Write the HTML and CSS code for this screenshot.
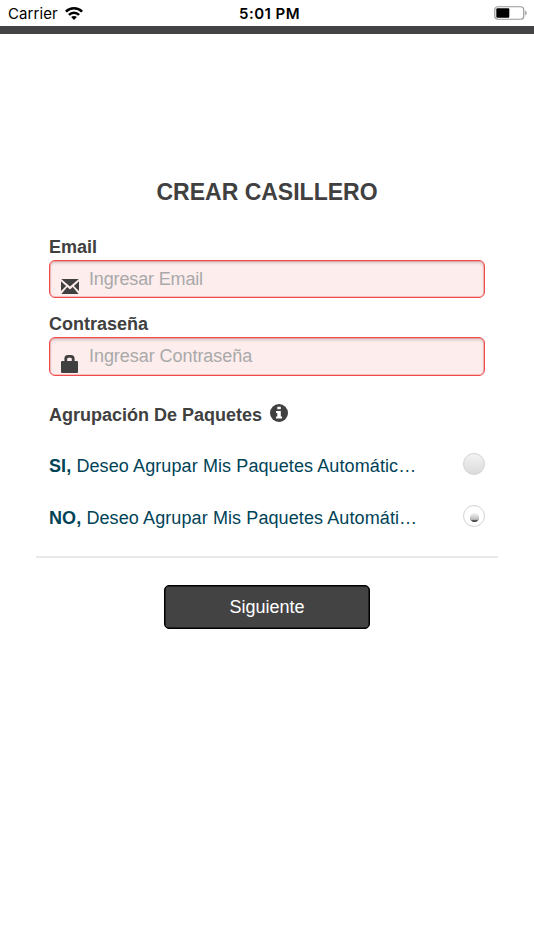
FILE: index.html
```html
<!DOCTYPE html>
<html lang="es">
<head>
<meta charset="utf-8">
<title>Crear Casillero</title>
<link rel="stylesheet" href="styles.css">
</head>
<body>
<header class="status">
  <div class="carrier"><span class="carrier-name">Carrier</span>
    <svg class="wifi" viewBox="0 0 18 13" width="18" height="13"><g fill="none" stroke="#000" stroke-width="2.5"><path d="M.9 4.7C5.4.2 12.6.2 17.1 4.7"/><path d="M3.9 7.9c2.9-2.9 7.3-2.9 10.2 0"/></g><path d="M9 13 6.1 10.1c1.6-1.6 4.2-1.6 5.8 0z"/></svg>
  </div>
  <time class="clock">5:01 PM</time>
  <svg class="battery" viewBox="0 0 34 14" width="34" height="14"><rect x=".75" y=".75" width="29" height="12.5" rx="3" fill="#fff" stroke="#999" stroke-width="1.2"/><rect x="2.3" y="2.3" width="13" height="9.4" rx="1"/><path d="M31.3 4.7c1.7.5 1.7 4.1 0 4.6z" fill="#888"/></svg>
</header>
<div class="topbar"></div>
<main class="page">
  <h1 class="title">CREAR CASILLERO</h1>
  <form class="form">
    <label class="label" for="email">Email</label>
    <div class="field">
      <svg class="icon" viewBox="0 0 18 15" width="18" height="15" fill="#404040"><path d="M.2 0h17.6L9 7.6zM0 2.2 5.1 7 0 12zM18 2.2 12.9 7 18 12zM6.2 8.1 9 10.5l2.8-2.4L17.6 15H.4z"/></svg>
      <input class="input email" id="email" type="email" placeholder="Ingresar Email">
    </div>
    <label class="label second" for="password">Contraseña</label>
    <div class="field">
      <svg class="icon lock" viewBox="0 0 17 18" width="17" height="18" fill="#404040"><path fill-rule="evenodd" d="M3.4 6V3.5Q3.4 0 7 0h3q3.6 0 3.6 3.5V6H16q1 0 1 1v10q0 1-1 1H1q-1 0-1-1V7q0-1 1-1zM6.2 6h4.6V4q0-1.2-1.2-1.2H7.4Q6.2 2.8 6.2 4z"/></svg>
      <input class="input" id="password" type="password" placeholder="Ingresar Contraseña">
    </div>
    <div class="group"><span>Agrupación De Paquetes</span>
      <svg class="info" viewBox="0 0 18 18" width="18" height="18"><circle cx="9" cy="9" r="9" fill="#404040"/><path fill="#fff" d="M7.3 2.7h3.5v2.6H7.3zM6 7h4.8v5.4H12v2.1H6v-2.1h1.3V9H6z"/></svg>
    </div>
    <label class="option"><span><b>SI,</b> Deseo Agrupar Mis Paquetes Automátic…</span><input class="radio" type="radio" name="group"></label>
    <label class="option"><span><b>NO,</b> Deseo Agrupar Mis Paquetes Automáti…</span><input class="radio" type="radio" name="group" checked></label>
  </form>
  <hr class="rule">
  <button class="next" type="button">Siguiente</button>
</main>
</body>
</html>
```
FILE: styles.css
```css
* { box-sizing: border-box; }
body { margin: 0; min-height: 950px; background: #fff; color: #404040; font-family: "Liberation Sans", Arial, sans-serif; }
.status { display: grid; grid-template-columns: 1fr auto 1fr; align-items: center; height: 26px; padding: 1px 6px 0 8px; color: #000; font: 15px/20px Inter, sans-serif; }
.carrier { display: flex; align-items: center; gap: 7px; letter-spacing: .1px; }
.wifi { margin-top: -1px; }
.clock { margin-left: 3px; font-weight: 600; letter-spacing: .45px; }
.battery { justify-self: end; margin-top: -1px; }
.topbar { height: 8px; background: #434244; }
.page { display: flex; flex-direction: column; padding: 142px 36px 0; }
.title { margin: 0; font-size: 23px; line-height: 32px; text-align: center; }
.form { display: flex; flex-direction: column; margin: 27px 13px 0; }
.label { height: 25px; font-size: 18px; line-height: 24px; font-weight: bold; }
.second { margin-top: 14px; }
.field { display: flex; align-items: center; height: 38px; padding: 0 12px 0 11px; border: 1px solid #ef4b4b; border-radius: 6px; background: #fdeded; box-shadow: inset 0 0 0 .5px #ef4b4b88, inset 0 2px 3px #bba9a999; }
.second + .field { height: 39px; }
.icon { flex: none; margin-top: 15px; }
.lock { margin-right: 1px; }
.input { flex: 1; min-width: 0; height: 100%; margin-left: 10px; padding: 0; border: 0; outline: 0; background: transparent; font: 18px "Liberation Sans", sans-serif; letter-spacing: -.05px; }
.email { letter-spacing: -.15px; }
.input::placeholder { color: #a9a9a9; opacity: 1; }
.group { display: flex; align-items: center; gap: 8px; height: 24px; margin: 27px 0 13px; font-size: 18px; line-height: 24px; font-weight: bold; }
.info { margin-top: -4px; }
.option { display: flex; align-items: center; justify-content: space-between; height: 52px; color: #004357; font-size: 18px; line-height: 24px; letter-spacing: .1px; white-space: nowrap; }
.radio { appearance: none; display: grid; place-items: center; width: 22px; height: 22px; margin: -4px 0 0; border: 1px solid #d3d3d3; border-radius: 50%; background: linear-gradient(#f3f3f3, #dadada); }
.radio:checked { background: #fff; }
.radio:checked::before { content: ""; width: 9px; height: 8px; margin-top: 3px; border-radius: 50%; background: linear-gradient(#f5f5f5, #bbb 80%, #333); border-bottom: 1px solid #333; }
.rule { width: 100%; height: 2px; margin: 12px 0 27px; border: 0; background: #e9e9e9; }
.next { align-self: center; width: 206px; height: 44px; padding: 0; border: 1px solid #000; border-radius: 5px; background: #434343; box-shadow: inset 0 0 0 .5px #000; color: #fff; font: 18px "Liberation Sans", sans-serif; }
```
